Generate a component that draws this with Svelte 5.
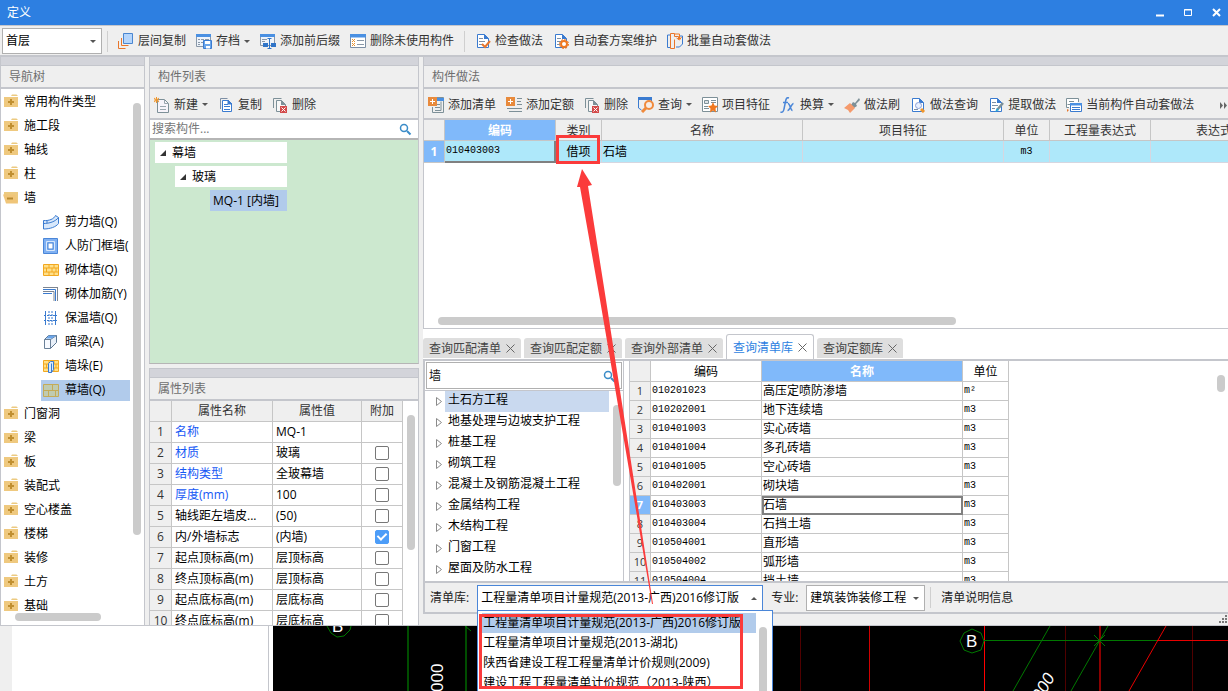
<script>
  const doc = '<path d="M2.5 1.5h7l4 4v9h-11z" fill="#fff" stroke="#3a7bd0"/><path d="M9 1v5h5z" fill="#3a7bd0"/>';
  const bricks = (fill, line) =>
    `<path d="M.5 2.5h15v11H.5zM.5 6h15M.5 10h15M6 2.5V6M11 2.5V6M3.5 6v4M9 6v4M13 6v4M6 10v3.5M11 10v3.5" fill="${fill}" stroke="${line}"/>`;

  const icons = {
    layers: '<path d="M.5 8v7.500h7M3.500 5v7.500h7" fill="none" stroke="#e8762c"/><path d="M5.500.5h9v10h-9z" fill="#b5d5fb" stroke="#4a86d0"/>',
    archive: '<path d="M.5 1.500h14v12H.5z" fill="#eef3fa" stroke="#8a98a8"/><path d="M0 1h15v3H0z" fill="#4a90e2"/><path d="M2 6.500h2M5 6.500h3M9 6.500h4M2 9.500h2M5 9.500h2M2 11.500h2" stroke="#8a98a8"/><path d="M7.500 7.500h8v8h-8z" fill="#6aa5ea" stroke="#3a7bd0"/><path d="M9 8h5v3H9z" fill="#fff"/><path d="M10 13h4v2.500h-4z" fill="#fff"/>',
    affix: '<path d="M.5 1.500h14v11H.5z" fill="#eef3fa" stroke="#8a98a8"/><path d="M0 1h15v3H0z" fill="#4a90e2"/><path d="M2 6.500h5M2 8.500h3" stroke="#8a98a8"/><path d="M3 10h5v4H3zM11 10h5v4h-5z" fill="#2f74c8"/><path d="M7.500 5.500h4M9.500 5.500v10M7.500 15.500h4" stroke="#2f74c8" fill="none"/>',
    listdel: '<path d="M.5 1.500h15v13H.5z" fill="#fff" stroke="#7d8fa5"/><path d="M0 1h16v3.500H0z" fill="#4a90e2"/><path d="M7 7.500h7M7 11.500h7" stroke="#8a98a8"/><path d="M2 6l3 3M5 6L2 9M2 10l3 3M5 10l-3 3" stroke="#e8902c"/>',
    check: doc + '<path d="M4 5.500h4M4 8.500h6M4 11.500h4" stroke="#7d8fa5"/><path d="M7 11l3 3 5-6" fill="none" stroke="#e8762c" stroke-width="2"/>',
    gear: doc + '<path d="M4 5.500h4M4 8.500h4M4 11.500h3" stroke="#7d8fa5"/><circle cx="11" cy="11" r="3" fill="#fff" stroke="#f07820" stroke-width="2"/><circle cx="11" cy="11" r="4.500" fill="none" stroke="#f07820" stroke-dasharray="2 1.500"/>',
    batch: '<path d="M4 2H.5v12.500H4M12.500 3h3v8l-3 3H9" fill="none" stroke="#3a7bd0"/><path d="M3.500.5h4v3h4v3M3.500.5v15h4v-9" fill="none" stroke="#e8762c"/><path d="M7.500 1h5v5M9.500 5l3 2 2-3" fill="none" stroke="#f07820"/>',
    create: '<path d="M3.500 2.500h7l4 4v9h-11z" fill="#f7f4fa" stroke="#7d9098"/><path d="M10.500 2.500v4h4M6 9.500h6M6 12.500h6" fill="none" stroke="#9aa6ae"/><path d="M0 1l5 4M5 1L0 5M2.500 0v6M0 3h5" stroke="#f0962c"/>',
    copy: '<path d="M2.500 12V1.500h7" fill="none" stroke="#7d8fa5"/><path d="M4.500 3.500h6l3 3v8h-9z" fill="#fff" stroke="#3a7bd0"/><path d="M10 3v4h4zM6 7.500h4M6 9.500h6M6 12.500h6" fill="#3a7bd0" stroke="#3a7bd0"/>',
    remove: '<path d="M1.500 11V1.500h8" fill="none" stroke="#7d9098"/><path d="M4.500 3.500h5l4 4v7h-9z" fill="#f7f7f7" stroke="#7d9098"/><path d="M9 3v5h5z" fill="#7d9098"/><path d="M8 9h7v7H8z" fill="#d34b4b"/><path d="M9.500 10.500l4 4M13.500 10.500l-4 4" stroke="#fff"/>',
    addlist: '<path d="M9 .5h6.500v15H4.500V10M7 13.500h6v-9" fill="none" stroke="#7d9098"/><path d="M9 1h7v3H9z" fill="#4a90e2"/><path d="M9 7.500h3M7 10.500h5" stroke="#7d9098"/><path d="M0 0h9v9H0z" fill="#e88a3c"/><path d="M4.500 2v5M2 4.500h5" stroke="#fff"/>',
    addquota: '<path d="M11 1.500h5M11 4.500h4M11 7.500h5M1 11.500h15M3 14.500h13" stroke="#7d9098"/><path d="M0 0h9v9H0z" fill="#e88a3c"/><path d="M4.500 2v5M2 4.500h5" stroke="#fff"/>',
    query: '<path d="M0 0h14v3H0z" fill="#3a7bd0"/><path d="M.5 2v9l3 2M13.500 3v2" fill="none" stroke="#3a7bd0"/><circle cx="11" cy="8" r="4" fill="#f7ede6" stroke="#f08a3c" stroke-width="2"/><path d="M8 11l-4 4" stroke="#f08a3c" stroke-width="3"/>',
    feature: '<path d="M.5.500h15v14H.5z" fill="#fff" stroke="#7d9098"/><path d="M2.500 3.500h4v3h-4z" fill="#dfe4e8" stroke="#7d9098"/><path d="M9 3.500h5M9 5.500h5M2 9.500h4M2 11.500h5" stroke="#7d9098"/><path d="M11 5l1.500 3.500 3.500.500-2.500 2.500.5 4-3-2-3 2 .5-4L6 9l3.500-.500z" fill="#f07820"/>',
    convert: '<path d="M9 1C6.500 0 6 2 5.500 4.500L4 12c-.5 3-2 3.500-3.500 3M3 5.500h5M8 6.500c2 0 2.500 7 4.500 7M13.500 6.500c-2 0-3.500 7-6 7" fill="none" stroke="#4a86d8" stroke-width="1.500"/>',
    brush: '<path d="M15 1l-4 5-2-1-2 3 3 3 3-2-1-2 4-4z" fill="#7d9098"/><path d="M6 6l5 5-5 5-2-3-4-2z" fill="#f59a6c"/>',
    docquery: doc + '<circle cx="8.500" cy="8.500" r="3" fill="#e8f0ff" stroke="#8aa0d8"/><path d="M11 12l3 3" stroke="#f0962c" stroke-width="3"/><path d="M4 12.500h4" stroke="#7d8fa5"/>',
    extract: doc + '<path d="M4 5.500h4M4 8.500h6M4 11.500h3" stroke="#7d8fa5"/><path d="M15 6l-6 7" stroke="#7d9098" stroke-width="2.500"/><path d="M7 15l2-4 2 2z" fill="#28a8d8"/>',
    current: '<path d="M3 10.500H.5v-9h12V5" fill="#fff" stroke="#7d9098"/><path d="M3 4.500h5M1.500 7.500H4" stroke="#7d9098"/><path d="M4.500 6.500h11v8h-11z" fill="#fff" stroke="#3a7bd0"/><path d="M4 6h12v2.500H4z" fill="#4a90e2"/><path d="M6 10.500h8M6 12.500h8" stroke="#3a7bd0"/><path d="M1 12l2 1-2 2z" fill="#e8762c"/>',
    folder: '<path d="M8 2l1-1.500h4.500L15 2z" fill="#ecca80"/><path d="M1 3h14v10H1z" fill="#efc97f"/><path d="M8 5v6M5 8h6" stroke="#c08f30" stroke-width="2"/>',
    open: '<path d="M1 2h14v3H1zM12 5h3v8l-3-2z" fill="#ecca80"/><path d="M0 4.500h12l3 9H3z" fill="#f0c578"/><path d="M4 8.500h6" stroke="#b88a30" stroke-width="2"/>',
    shear: '<path d="M.5 6.500C6 7 11 5 12.500 1.500l3 2v6C13 13 7 15 .5 15z" fill="#d8e8fb" stroke="#3a7bd0"/><path d="M.5 9.500c6 0 12-2 15-6M4 6v3" fill="none" stroke="#3a7bd0"/>',
    frame: '<path d="M.5.5h14v15H.5z" fill="#7fb0f2" stroke="#4a86d8"/><path d="M3.500 3.500h8v9h-8z" fill="none" stroke="#d8e8fb"/><path d="M5 5h5v6H5z" fill="#fff" stroke="#4a86d8"/>',
    masonry: bricks('#ffe08a', '#f2a820'),
    rebar: '<path d="M0 1.500h15M0 5.500h11V15M14.500 1v14" fill="none" stroke="#7d8590"/><path d="M0 3.500h12.500V15M0 7.500h9" fill="none" stroke="#3a7bd0"/>',
    insulate: '<path d="M2.500 1v14M12.500 1v14" stroke="#3a7bd0"/><path d="M6 1v14M9 1v14M1 5.500h13M1 10.500h13" stroke="#3a7bd0" stroke-dasharray="2 1"/>',
    hidden: '<path d="M1.500 5.500l4-4h8v7l-6 6v-9z" fill="#e8eff8" stroke="#5a7590"/><path d="M1.500 5.500h6v9h-6zM7.500 5.500l6-4" fill="#f7faff" stroke="#6a8098"/><path d="M3 4.500l3-3h7l-4 3z" fill="#6aa5ea"/>',
    pier: bricks('#ffe08a', '#f2a820') + '<path d="M5.500 5.500l2-2h3v8l-2 3h-3z" fill="#d8eafd" stroke="#3a7bd0"/><path d="M8.500 5.500v9" stroke="#3a7bd0"/>',
    curtain: '<path d="M.5 2.500h15v12H.5zM.5 8.500h15M9.500 2.500v6M5.500 8.500v6M12.500 8.500v6" fill="#c0cbb0" stroke="#c4ab58"/>',
    search: '<circle cx="7" cy="7" r="3.500" fill="none" stroke="#3a8cc8" stroke-width="1.500"/><path d="M10 10l3.500 3.500" stroke="#3a8cc8" stroke-width="2"/>'
  };

  const mainTools = [
    { icon: 'layers', label: '层间复制' },
    { icon: 'archive', label: '存档', menu: true },
    { icon: 'affix', label: '添加前后缀' },
    { icon: 'listdel', label: '删除未使用构件' },
    { sep: true },
    { icon: 'check', label: '检查做法' },
    { icon: 'gear', label: '自动套方案维护' },
    { icon: 'batch', label: '批量自动套做法' }
  ];

  const listTools = [
    { icon: 'create', label: '新建', menu: true },
    { icon: 'copy', label: '复制' },
    { icon: 'remove', label: '删除' }
  ];

  const methodTools = [
    { icon: 'addlist', label: '添加清单' },
    { icon: 'addquota', label: '添加定额' },
    { icon: 'remove', label: '删除' },
    { icon: 'query', label: '查询', menu: true },
    { icon: 'feature', label: '项目特征' },
    { icon: 'convert', label: '换算', menu: true },
    { icon: 'brush', label: '做法刷' },
    { icon: 'docquery', label: '做法查询' },
    { icon: 'extract', label: '提取做法' },
    { icon: 'current', label: '当前构件自动套做法' }
  ];

  const nav = [
    { label: '常用构件类型' },
    { label: '施工段' },
    { label: '轴线' },
    { label: '柱' },
    {
      label: '墙',
      children: [
        ['shear', '剪力墙(Q)'],
        ['frame', '人防门框墙('],
        ['masonry', '砌体墙(Q)'],
        ['rebar', '砌体加筋(Y)'],
        ['insulate', '保温墙(Q)'],
        ['hidden', '暗梁(A)'],
        ['pier', '墙垛(E)'],
        ['curtain', '幕墙(Q)']
      ]
    },
    { label: '门窗洞' },
    { label: '梁' },
    { label: '板' },
    { label: '装配式' },
    { label: '空心楼盖' },
    { label: '楼梯' },
    { label: '装修' },
    { label: '土方' },
    { label: '基础' }
  ];
  let activeNav = $state('幕墙(Q)');

  let props = $state([
    { name: '名称', value: 'MQ-1', key: true },
    { name: '材质', value: '玻璃', key: true, extra: false },
    { name: '结构类型', value: '全玻幕墙', key: true, extra: false },
    { name: '厚度(mm)', value: '100', key: true, extra: false },
    { name: '轴线距左墙皮...', value: '(50)', extra: false },
    { name: '内/外墙标志', value: '(内墙)', extra: true },
    { name: '起点顶标高(m)', value: '层顶标高', extra: false },
    { name: '终点顶标高(m)', value: '层顶标高', extra: false },
    { name: '起点底标高(m)', value: '层底标高', extra: false },
    { name: '终点底标高(m)', value: '层底标高', extra: false }
  ]);

  const tabs = ['查询匹配清单', '查询匹配定额', '查询外部清单', '查询清单库', '查询定额库'];
  let activeTab = $state('查询清单库');

  const chapters = [
    '土石方工程', '地基处理与边坡支护工程', '桩基工程', '砌筑工程', '混凝土及钢筋混凝土工程',
    '金属结构工程', '木结构工程', '门窗工程', '屋面及防水工程'
  ];
  let activeChapter = $state('土石方工程');

  const items = [
    ['010201023', '高压定喷防渗墙', 'm²'],
    ['010202001', '地下连续墙', 'm3'],
    ['010401003', '实心砖墙', 'm3'],
    ['010401004', '多孔砖墙', 'm3'],
    ['010401005', '空心砖墙', 'm3'],
    ['010402001', '砌块墙', 'm3'],
    ['010403003', '石墙', 'm3'],
    ['010403004', '石挡土墙', 'm3'],
    ['010504001', '直形墙', 'm3'],
    ['010504002', '弧形墙', 'm3'],
    ['010504004', '挡土墙', 'm3']
  ];
  let activeItem = $state('010403003');

  const libraries = [
    '工程量清单项目计量规范(2013-广西)2016修订版',
    '工程量清单项目计量规范(2013-湖北)',
    '陕西省建设工程工程量清单计价规则(2009)',
    '建设工程工程量清单计价规范（2013-陕西）'
  ];
  let library = $state(libraries[0]);
  let keyword = $state('墙');
</script>

{#snippet icon(name)}
  <svg class="icon" width="16" height="16" viewBox="0 0 16 16" aria-hidden="true">{@html icons[name]}</svg>
{/snippet}

{#snippet tools(list)}
  {#each list as t}
    {#if t.sep}
      <span class="sep"></span>
    {:else}
      <button class="tool">
        {@render icon(t.icon)}
        {t.label}
        {#if t.menu}<span class="caret"></span>{/if}
      </button>
    {/if}
  {/each}
{/snippet}

{#snippet title(text)}
  <div class="strip"></div>
  <h2>{text}</h2>
{/snippet}

<div class="app">
  <div class="dialog">
    <header class="titlebar">
      <h1>定义</h1>
      <button aria-label="最小化"><svg width="9" height="9"><path d="M0 7.500h8" stroke="#fff" stroke-width="2" /></svg></button>
      <button aria-label="最大化"><svg width="9" height="9"><path d="M.5 1.500h7v6h-7zM0 2h8" fill="none" stroke="#fff" /></svg></button>
      <button aria-label="关闭"><svg width="9" height="9"><path d="M1 1l7 7M8 1L1 8" stroke="#fff" stroke-width="2" /></svg></button>
    </header>

    <div class="toolbar main">
      <div class="combo floor">
        <select aria-label="楼层"><option>首层</option></select>
      </div>
      <span class="sep"></span>
      {@render tools(mainTools)}
    </div>

    <div class="body">
      <section class="panel left">
        {@render title('导航树')}
        <div class="nav">
          <ul>
            {#each nav as n}
              <li class="group">{@render icon(n.children ? 'open' : 'folder')}{n.label}</li>
              {#each n.children ?? [] as [ic, label]}
                <li>
                  <button class="child" class:active={activeNav === label} onclick={() => (activeNav = label)}>
                    {@render icon(ic)}{label}
                  </button>
                </li>
              {/each}
            {/each}
          </ul>
          <span class="scroll nav-v"></span>
          <span class="scroll nav-h"></span>
        </div>
      </section>

      <div class="middle">
        <section class="panel list">
          {@render title('构件列表')}
          <div class="toolbar">{@render tools(listTools)}</div>
          <div class="search">
            <input type="text" aria-label="搜索构件" placeholder="搜索构件..." />
            {@render icon('search')}
          </div>
          <ul class="parts">
            <li class="lv1"><span class="tri"></span>幕墙</li>
            <li class="lv2"><span class="tri"></span>玻璃</li>
            <li class="lv3">MQ-1 [内墙]</li>
          </ul>
        </section>

        <section class="panel props">
          {@render title('属性列表')}
          <div class="props-body">
            <table>
              <thead>
                <tr><th class="p-no"></th><th class="p-name">属性名称</th><th class="p-value">属性值</th><th class="p-extra">附加</th></tr>
              </thead>
              <tbody>
                {#each props as p, i}
                  <tr>
                    <th>{i + 1}</th>
                    <td class:key={p.key}>{p.name}</td>
                    <td>{p.value}</td>
                    <td class="tick">
                      {#if p.extra !== undefined}
                        <input type="checkbox" aria-label={p.name} bind:checked={p.extra} />
                      {/if}
                    </td>
                  </tr>
                {/each}
              </tbody>
            </table>
            <span class="scroll props-v"></span>
          </div>
        </section>
      </div>

      <div class="right">
        <section class="panel methods">
          {@render title('构件做法')}
          <div class="toolbar">
            {@render tools(methodTools)}
            <button class="more" aria-label="更多"><svg width="8" height="7"><path d="M0 0l3 3.500L0 7zM4 0l3 3.500L4 7z" fill="#666" /></svg></button>
          </div>
          <div class="sheet">
            <table>
              <thead>
                <tr>
                  <th class="no"></th>
                  <th class="m-code sel">编码</th>
                  <th class="m-unit">类别</th>
                  <th class="m-name">名称</th>
                  <th class="m-name">项目特征</th>
                  <th class="m-unit">单位</th>
                  <th class="m-expr">工程量表达式</th>
                  <th class="m-desc">表达式说明</th>
                </tr>
              </thead>
              <tbody>
                <tr>
                  <th class="sel">1</th>
                  <td class="mono focus">010403003</td>
                  <td class="center marked">借项</td>
                  <td>石墙</td>
                  <td></td>
                  <td class="mono center">m3</td>
                  <td></td>
                  <td></td>
                </tr>
              </tbody>
            </table>
          </div>
          <span class="scroll sheet-h"></span>
        </section>

        <div class="tabs" role="tablist">
          {#each tabs as t}
            <button role="tab" aria-selected={activeTab === t} class:active={activeTab === t} onclick={() => (activeTab = t)}>
              {t}
              <svg width="9" height="9"><path d="M.5.5l8 8M8.500.5l-8 8" stroke="#666" /></svg>
            </button>
          {/each}
        </div>

        <div class="query">
          <div class="chapters">
            <div class="search boxed">
              <input type="text" aria-label="查询" bind:value={keyword} />
              {@render icon('search')}
            </div>
            <ul>
              {#each chapters as c}
                <li>
                  <svg width="6" height="9"><path d="M.5.500v8l5-4z" fill="none" stroke="#8a8a8a" /></svg>
                  <button class:active={activeChapter === c} onclick={() => (activeChapter = c)}>{c}</button>
                </li>
              {/each}
            </ul>
            <span class="scroll chapters-v"></span>
          </div>
          <div class="items">
            <table>
              <thead>
                <tr><th class="no"></th><th class="m-code">编码</th><th class="m-name sel">名称</th><th class="m-unit">单位</th></tr>
              </thead>
              <tbody>
                {#each items as [code, name, unit], i}
                  <tr onclick={() => (activeItem = code)}>
                    <th class:sel={activeItem === code}>{i + 1}</th>
                    <td class="mono">{code}</td>
                    <td class:cursor={activeItem === code}>{name}</td>
                    <td class="mono">{unit}</td>
                  </tr>
                {/each}
              </tbody>
            </table>
            <span class="scroll items-v"></span>
          </div>
        </div>

        <div class="footer">
          <label for="library">清单库:</label>
          <div class="combo library open">
            <select id="library" bind:value={library}>
              {#each libraries as l}<option>{l}</option>{/each}
            </select>
            <div class="dropdown">
              <ul role="listbox" aria-label="清单库">
                {#each libraries as l}
                  <li role="option" aria-selected={library === l}>{l}</li>
                {/each}
              </ul>
              <span class="scroll drop-v"></span>
              <span class="redbox"></span>
            </div>
          </div>
          <label for="major">专业:</label>
          <div class="combo major">
            <select id="major"><option>建筑装饰装修工程</option></select>
          </div>
          <span class="sep"></span>
          <button class="info">清单说明信息</button>
        </div>
        <div class="status">
          <svg width="9" height="9"><path d="M6 0h2v2H6zM3 3h2v2H3zM6 3h2v2H6zM0 6h2v2H0zM3 6h2v2H3zM6 6h2v2H6z" fill="#777" /></svg>
        </div>

        <!-- arrow from the library list up to the category cell -->
        <svg class="arrow" width="80" height="440" aria-hidden="true">
          <path d="M7 2l10 16-4 1 18 114 47 304h-1L25 133 5 20H2z" fill="#fb3b3b" />
        </svg>
      </div>
    </div>
  </div>

  <div class="cad">
    <div class="gutter"></div>
    <div class="paper"></div>
    <svg class="model" height="65" aria-hidden="true">
      <g fill="none">
        <path d="M135 0v65M193 0v65" stroke="#004d00" stroke-width="2" />
        <path d="M192 0l6 5" stroke="#007800" />
        <path d="M527.500 0v65M792.500 0v65M919.500 0v65" stroke="#500000" />
        <path d="M596.500 0v65" stroke="#d00000" />
        <path d="M711.500 0v65" stroke="#ff0000" />
        <path d="M827 0v65" stroke="#8b0000" stroke-width="2" />
        <path d="M711 14.500h173M777 0l-37 65M835 0l-37 65M821 9l11 11M832 9l-11 11" stroke="#007800" />
        <path d="M884 14.500h400M893 0l-37 65" stroke="#e80000" />
        <path d="M54 0l4 7 6 4 7-1 6-6 1-4M699 3l9 4 3 8-3 9-9 3-8-3-4-9 4-8z" stroke="#007800" />
      </g>
      <g fill="#fff">
        <text x="59" y="6">B</text>
        <text x="693" y="21">B</text>
        <text transform="translate(170 66) rotate(-90)">000</text>
        <text transform="translate(768 76) rotate(-60)" font-style="italic">000</text>
      </g>
    </svg>
  </div>
</div>

<style>
  :global(body) {
    margin: 0;
  }

  .app {
    display: flex;
    flex-direction: column;
    height: 100vh;
    overflow: hidden;
    font-family: "Open Sans", "Noto Sans CJK SC", sans-serif;
    font-size: 12px;
    line-height: 18px;
    color: #111;
    background: #fff;
  }

  .app *,
  .app *::after {
    box-sizing: border-box;
  }

  .app :is(button, select, input) {
    font: inherit;
    color: inherit;
    background: none;
    border: none;
    border-radius: 0;
    margin: 0;
    padding: 0;
    outline: none;
    white-space: nowrap;
  }

  ul {
    list-style: none;
    margin: 0;
    padding: 0;
  }

  .icon {
    flex: none;
  }

  .dialog {
    flex: 1;
    min-height: 0;
    display: flex;
    flex-direction: column;
    background: #efefef;
    border-bottom: 1px solid #c4c6cc;
  }

  .titlebar {
    flex: none;
    height: 25px;
    display: flex;
    align-items: center;
    padding: 0 7px;
    gap: 19px;
    background: #2d7fe1;
    color: #fff;
  }

  h1 {
    flex: 1;
    margin: 0;
    font-size: 12px;
    font-weight: normal;
  }

  .titlebar button {
    display: flex;
  }

  .toolbar {
    flex: none;
    display: flex;
    align-items: center;
    height: 31px;
    overflow: hidden;
    padding-top: 2px;
    color: #333;
    border-bottom: 2px solid #c4c6cc;
  }

  .toolbar.main {
    height: 32px;
    padding: 1px 2px 0;
    border-top: 1px solid #c4c6cc;
  }

  .tool {
    flex: none;
    display: flex;
    align-items: center;
    gap: 4px;
    padding: 0 5px !important;
  }

  .tool:first-child {
    padding-left: 4px !important;
  }

  .caret {
    border: 3px solid transparent;
    border-top-color: #555;
    border-bottom: none;
  }

  .sep {
    flex: none;
    width: 1px;
    height: 21px;
    margin: 0 5px;
    background: #cfcfcf;
  }

  .more {
    margin-left: auto !important;
  }

  .combo {
    position: relative;
    height: 26px;
    background: #fff;
    border: 1px solid #b0b0b0;
    color: #000;
  }

  .combo select {
    appearance: none;
    width: 100%;
    height: 24px;
    padding: 0 3px;
  }

  .combo::after {
    content: '';
    position: absolute;
    right: 5px;
    top: 11px;
    border: 3px solid transparent;
    border-top-color: #555;
    border-bottom: none;
    pointer-events: none;
  }

  .floor {
    width: 100px;
  }

  .body {
    flex: 1;
    min-height: 0;
    display: flex;
    gap: 4px;
  }

  .panel {
    display: flex;
    flex-direction: column;
    min-height: 0;
    border: 1px solid #c4c6cc;
    border-top: none;
    border-bottom: none;
  }

  .strip {
    flex: none;
    height: 9px;
    background: #d3d4da;
    border-bottom: 1px solid #c4c6cc;
  }

  h2 {
    flex: none;
    margin: 0;
    height: 23px;
    padding-left: 8px;
    font-size: 12px;
    font-weight: normal;
    line-height: 22px;
    color: #6e6e6e;
    border-bottom: 2px solid #c4c6cc;
  }

  .scroll {
    position: absolute;
    border-radius: 4px;
    background: #cbcbcb;
  }

  .left {
    flex: none;
    width: 145px;
  }

  .nav {
    position: relative;
    flex: 1;
    min-height: 0;
    padding-top: 1px;
    overflow: hidden;
    background: #fff;
    color: #000;
  }

  .nav li {
    display: flex;
    align-items: center;
    height: 24px;
  }

  .group {
    padding-left: 2px;
    gap: 5px;
  }

  .child {
    display: flex;
    align-items: center;
    gap: 6px;
    width: 89px;
    height: 21px;
    margin-left: 40px !important;
    padding-left: 2px !important;
    overflow: hidden;
  }

  .child.active,
  .parts .lv3 {
    background: #b1cbeb !important;
  }

  .nav-v {
    right: 3px;
    top: 14px;
    bottom: 90px;
    width: 8px;
  }

  .nav-h {
    left: 0;
    bottom: 0;
    width: 126px;
    height: 14px;
    background: #fff;
  }

  .nav-h::after {
    content: '';
    position: absolute;
    left: 14px;
    top: 2px;
    width: 86px;
    height: 8px;
    border-radius: 4px;
    background: #cbcbcb;
  }

  .middle {
    flex: none;
    width: 270px;
    display: flex;
    flex-direction: column;
    gap: 4px;
  }

  .list {
    flex: 307 1 0;
    border-bottom: 1px solid #b5b5b5;
  }

  .props {
    flex: 257 1 0;
    border-top: 1px solid #c4c6cc;
  }

  .search {
    flex: none;
    display: flex;
    align-items: center;
    height: 20px;
    padding: 0 5px 0 2px;
    background: #fff;
    border-bottom: 2px solid #b5b5b5;
  }

  .search input {
    flex: 1;
    min-width: 0;
    height: 18px;
  }

  .search input::placeholder {
    color: #777;
  }

  .parts {
    flex: 1;
    padding: 2px 0 0 5px;
    background: #cce8cf;
    color: #000;
  }

  .parts li {
    display: flex;
    align-items: center;
    gap: 6px;
    width: 132px;
    height: 21px;
    margin-bottom: 3px;
    padding-left: 5px;
    background: #fff;
  }

  .parts .lv2 {
    width: 112px;
    margin-left: 20px;
  }

  .parts .lv3 {
    width: 77px;
    margin-left: 55px;
    padding-left: 3px;
    white-space: nowrap;
  }

  .tri {
    border-left: 6px solid transparent;
    border-bottom: 6px solid #333;
  }

  table {
    table-layout: fixed;
    border-collapse: separate;
    border-spacing: 0;
  }

  th,
  td {
    height: 21px;
    padding: 1px 2px 0;
    overflow: hidden;
    white-space: nowrap;
    text-align: left;
    font-weight: normal;
    line-height: 18px;
    border-right: 1px solid #c6c6c6;
    border-bottom: 1px solid #c6c6c6;
  }

  th {
    text-align: center;
    color: #333;
    background: #efefef;
  }

  .no {
    width: 21px;
  }

  tbody th {
    padding: 1px 0 0;
  }

  th.sel {
    background: #80b9fa;
    color: #fff;
    font-weight: bold;
  }

  .mono {
    font-family: "Liberation Mono", "Noto Sans CJK SC", monospace;
    font-size: 10px;
  }

  .center {
    text-align: center;
  }

  .props-body {
    position: relative;
    flex: 1;
    min-height: 0;
    overflow: hidden;
    background: #fff;
  }

  .props table {
    width: 253px;
  }

  .p-no {
    width: 22px;
  }

  .p-name {
    width: 101px;
  }

  .p-value {
    width: 89px;
  }

  .p-extra {
    width: 41px;
  }

  .props td {
    color: #000;
    padding-left: 3px;
  }

  .props td.key {
    color: #1658f5;
  }

  .props .tick {
    padding: 0;
  }

  .tick input {
    appearance: none;
    display: block;
    width: 14px;
    height: 14px;
    margin: 0 auto !important;
    border: 1px solid #777 !important;
    border-radius: 2px !important;
    background: #fff !important;
  }

  .tick input:checked {
    background: #4d9df8 !important;
    border-color: #4d9df8 !important;
  }

  .tick input:checked::after {
    content: '';
    display: block;
    width: 6px;
    height: 9px;
    margin: 0 auto;
    border: solid #fff;
    border-width: 0 2px 2px 0;
    transform: rotate(45deg);
  }

  .props-v {
    right: 3px;
    top: 14px;
    width: 8px;
    height: 135px;
  }

  .right {
    position: relative;
    flex: 1;
    min-width: 0;
    display: flex;
    flex-direction: column;
  }

  .methods {
    position: relative;
    flex: 272 1 0;
    border-right: none;
    border-bottom: 1px solid #c4c6cc;
    background: #efefef;
  }

  .sheet {
    flex: 1;
    min-height: 0;
    overflow: hidden;
    background: #fff;
  }

  .sheet table {
    width: 100%;
    min-width: 878px;
  }

  .m-code {
    width: 111px;
  }

  .m-unit {
    width: 46px;
  }

  .m-name {
    width: 201px;
  }

  .m-expr {
    width: 101px;
  }

  .m-desc {
    width: 151px;
  }

  .sheet td,
  .items td {
    padding: 0 1px;
    color: #000;
  }

  .sheet td {
    height: 22px;
    background: #aee8fa;
    border-color: #d6d6e0;
  }

  .sheet .focus {
    border-right: 2px solid #808080;
    border-bottom: 2px solid #808080;
  }

  .sheet .marked {
    position: relative;
    overflow: visible;
  }

  .marked::after {
    content: '';
    position: absolute;
    left: 0;
    top: -6px;
    width: 44px;
    height: 29px;
    border: 3px solid #fb3b3b;
  }

  .sheet-h {
    left: 14px;
    bottom: 3px;
    width: 518px;
    height: 8px;
  }

  .tabs {
    flex: none;
    display: flex;
    align-items: flex-end;
    gap: 3px;
    height: 32px;
    background: #fff;
    border-bottom: 2px solid #c4c6cc;
  }

  .app .tabs button {
    display: flex;
    align-items: center;
    gap: 5px;
    height: 20px;
    margin-bottom: 1px;
    padding: 1px 6px 0;
    color: #444;
    background: #dedede;
    border-radius: 3px 3px 0 0;
  }

  .app .tabs button.active {
    height: 25px;
    margin-bottom: 0;
    color: #2d7fe1;
    background: #fff;
    border: 1px solid #c4c6cc;
    border-bottom: none;
  }

  .query {
    flex: 220 1 0;
    min-height: 0;
    display: flex;
    gap: 5px;
    background: #fff;
    border-left: 2px solid #c4c6cc;
  }

  .chapters {
    position: relative;
    flex: none;
    width: 199px;
    overflow: hidden;
    border-right: 1px solid #c4c6cc;
  }

  .boxed {
    height: 27px;
    margin: 1px 1px 0;
    padding: 0 4px 0 2px;
    border: 1px solid #b0b0b0;
  }

  .chapters ul {
    margin-top: 1px;
    border-top: 1px solid #c4c6cc;
  }

  .chapters li {
    display: flex;
    align-items: center;
    gap: 3px;
    height: 21px;
    padding-left: 11px;
  }

  .app .chapters li button {
    width: 164px;
    height: 21px;
    padding: 0 0 3px 3px;
    text-align: left;
    color: #000;
  }

  .app .chapters li button.active {
    background: #c9d9ef;
  }

  .chapters-v {
    right: 2px;
    top: 44px;
    width: 8px;
    height: 81px;
  }

  .items {
    position: relative;
    flex: 1;
    min-width: 0;
    overflow: hidden;
    border-left: 1px solid #c4c6cc;
  }

  .items table {
    width: 379px;
  }

  .items thead th:not(.sel):not(.no) {
    background: #fff;
    color: #000;
  }

  .items tbody :is(th, td) {
    height: 19px;
  }

  .items tbody th {
    padding: 0;
    font-size: 11px;
  }

  .items .cursor {
    outline: 2px solid #808080;
    outline-offset: -2px;
  }

  .items-v {
    right: 3px;
    top: 14px;
    width: 8px;
    height: 17px;
  }

  .footer {
    flex: none;
    display: flex;
    align-items: center;
    height: 33px;
    padding-left: 5px;
    color: #222;
    border: 2px solid #c4c6cc;
    border-right: none;
  }

  .library {
    width: 286px;
    margin: 0 8px;
  }

  .library.open {
    border-color: #4a86d8;
  }

  .open::after {
    border: 3px solid transparent;
    border-bottom-color: #555;
    border-top: none;
  }

  .major {
    width: 119px;
    margin-left: 8px;
  }

  .info {
    margin-left: 5px !important;
  }

  .dropdown {
    position: absolute;
    z-index: 2;
    left: -1px;
    top: 24px;
    width: 296px;
    height: 100px;
    padding: 2px 4px;
    background: #fff;
    border: 1px solid #4a86d8;
  }

  .dropdown li {
    width: 274px;
    height: 20px;
    line-height: 20px;
    padding-left: 1px;
    white-space: nowrap;
  }

  .dropdown li[aria-selected='true'] {
    background: #b1cbeb;
  }

  .drop-v {
    right: 5px;
    top: 16px;
    width: 8px;
    height: 90px;
  }

  .redbox {
    position: absolute;
    left: 1px;
    top: 3px;
    width: 264px;
    height: 75px;
    border: 3px solid #fb3b3b;
  }

  .status {
    flex: none;
    display: flex;
    justify-content: flex-end;
    align-items: center;
    height: 11px;
  }

  .arrow {
    position: absolute;
    left: 152px;
    top: 110px;
    pointer-events: none;
    z-index: 3;
  }

  .cad {
    flex: none;
    display: flex;
    height: 65px;
    background: #fff;
  }

  .gutter {
    flex: none;
    width: 12px;
    background: #efefef;
  }

  .paper {
    flex: none;
    width: 257px;
    margin-right: 4px;
    border-right: 1px solid #c4c6cc;
  }

  .model {
    flex: 1;
    min-width: 0;
    background: #000;
    font-family: "Liberation Sans", sans-serif;
    font-size: 17px;
  }
</style>
